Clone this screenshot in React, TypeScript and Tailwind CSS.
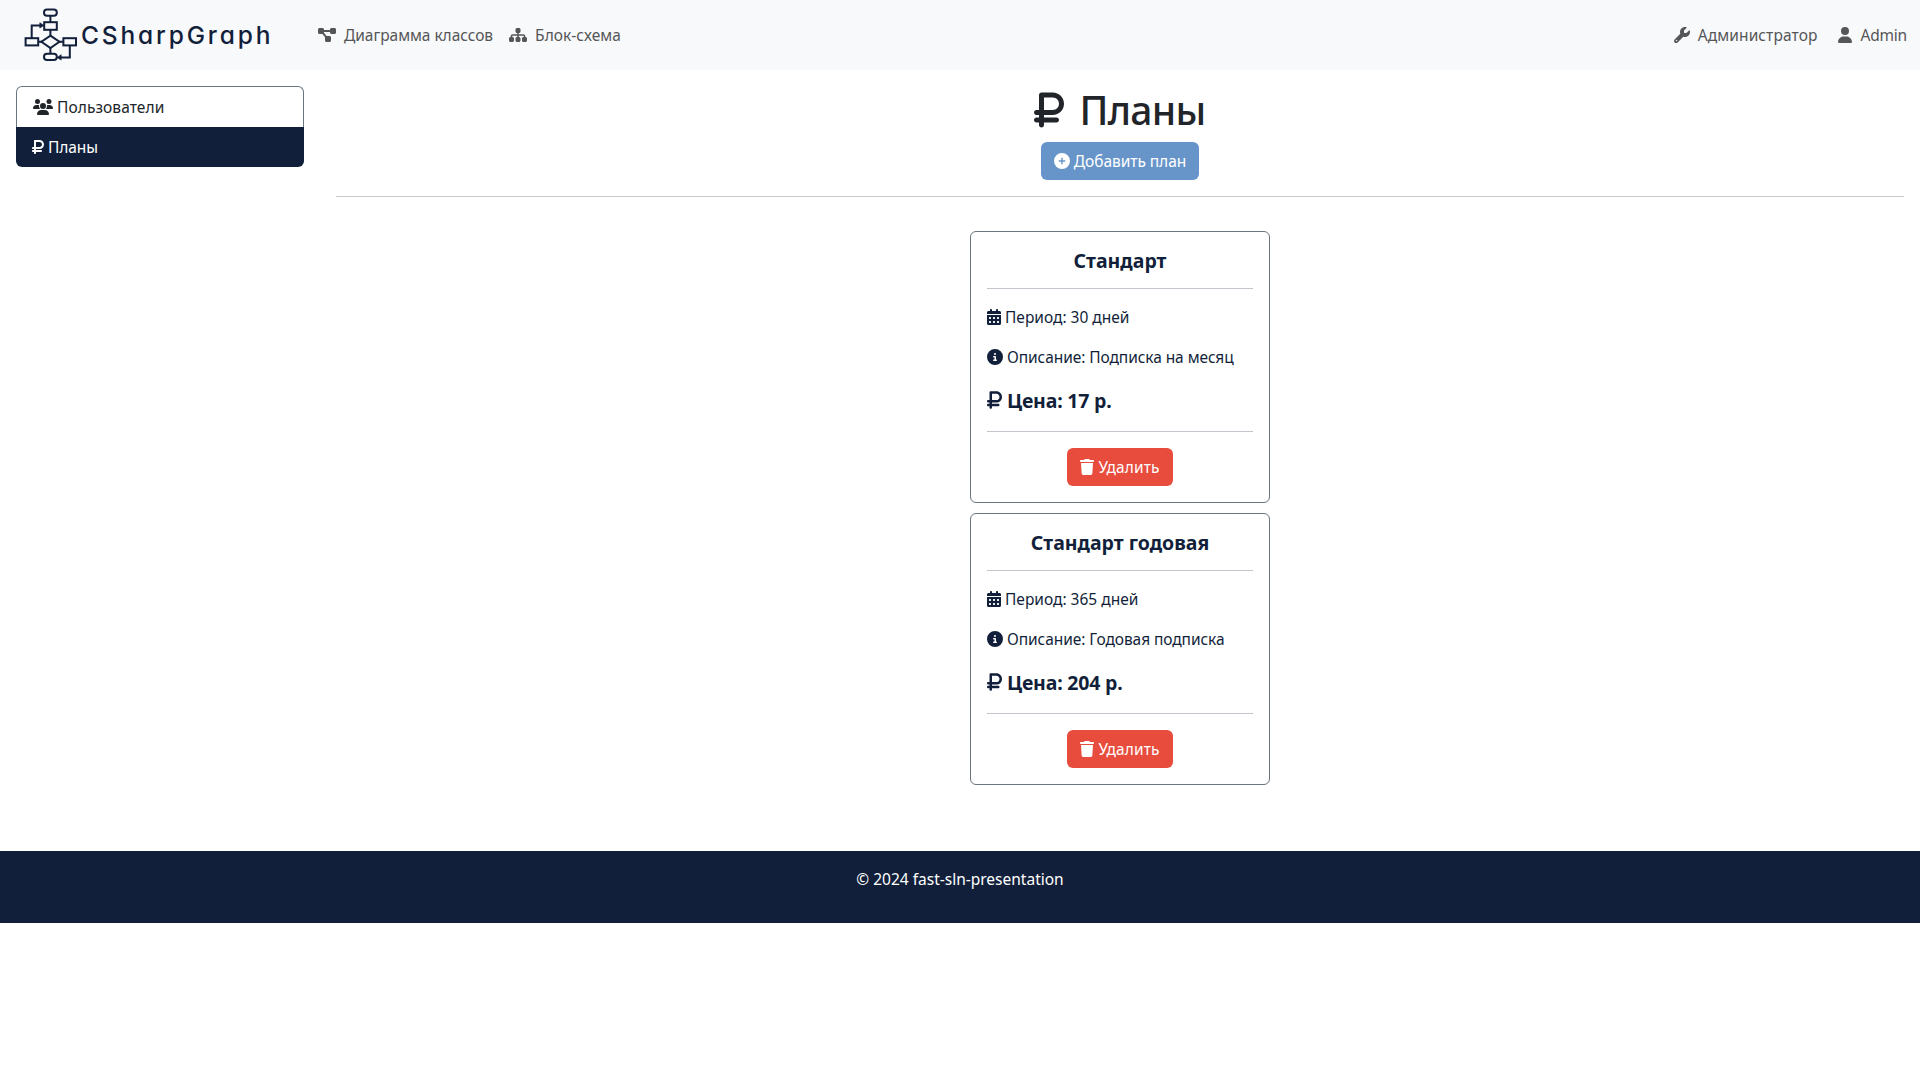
import type { ReactNode } from "react";
import {
  FaCalendarDays,
  FaCircleInfo,
  FaCirclePlus,
  FaDiagramProject,
  FaRubleSign,
  FaSitemap,
  FaTrash,
  FaUser,
  FaUsers,
  FaWrench,
} from "react-icons/fa6";

function Logo() {
  return (
    <div className="flex h-[54px] w-[248px] items-center text-[#121f3a]">
      <svg
        className="h-[54px] w-[54px] shrink-0"
        viewBox="0 0 54 54"
        fill="none"
        stroke="currentColor"
        strokeWidth="2"
      >
        <rect x="21" y="1.6" width="12.8" height="6.2" rx="3" />
        <rect x="21.2" y="14.2" width="12.6" height="7.6" />
        <rect x="2.6" y="30.2" width="12.6" height="7.2" />
        <rect x="40.4" y="30.2" width="12.6" height="7.2" />
        <rect x="21" y="45.8" width="12.8" height="6.2" rx="3" />
        <path d="M27.4 27.6 36.4 33.8l-9 6.2-9-6.2z" />
        <path d="M27.4 8v6M27.4 22v5.6M27.4 40v6M15 33.8h4M36 33.8h4.4M8.7 30.2V17.4h9M46.8 37.4v12h-9" />
        <path d="M16.8 14.7v5.4l4.2-2.7zM38.2 46.7v5.4l-4.2-2.7z" fill="currentColor" strokeWidth="0.6" />
      </svg>
      <span className="ml-1 whitespace-nowrap font-['Inter',sans-serif] text-[24.5px] leading-none font-[450] tracking-[2.85px] [font-feature-settings:'cv11']">
        CSharpGraph
      </span>
    </div>
  );
}

function NavLink({ children, className }: { children: ReactNode; className?: string }) {
  return (
    <a className={`flex items-center gap-2 whitespace-nowrap text-[#555657] ${className ?? ""}`}>{children}</a>
  );
}

type Plan = { name: string; period: string; description: string; price: string };

const plans: Plan[] = [
  { name: "Стандарт", period: "30 дней", description: "Подписка на месяц", price: "17 р." },
  { name: "Стандарт годовая", period: "365 дней", description: "Годовая подписка", price: "204 р." },
];

function PlanCard({ plan }: { plan: Plan }) {
  return (
    <article className="w-[300px] rounded-md border border-[#68767f] p-4 text-[#121f3a]">
      <h5 className="h-6 pt-px text-center text-[19.5px] leading-6 font-bold">{plan.name}</h5>
      <hr className="my-4 border-[#c2c5cc]" />
      <p className="mb-4 flex h-6 items-center gap-1 whitespace-nowrap">
        <FaCalendarDays className="h-4 w-[14px] shrink-0" />
        <span>Период: {plan.period}</span>
      </p>
      <p className="mb-4 flex h-6 items-center gap-1 tracking-[-0.07px] whitespace-nowrap">
        <FaCircleInfo className="size-4 shrink-0" />
        <span>Описание: {plan.description}</span>
      </p>
      <p className="flex h-[30px] items-center gap-[5px] text-[19.5px] font-bold tracking-[-0.2px] whitespace-nowrap">
        <FaRubleSign className="h-5 w-[15px] shrink-0" />
        <span className="pt-[2px]">Цена: {plan.price}</span>
      </p>
      <hr className="my-4 border-[#c2c5cc]" />
      <button className="mx-auto flex h-[38px] w-[106px] items-center justify-center gap-1 rounded-md bg-[#e84c3d] text-white">
        <FaTrash className="h-4 w-[14px] shrink-0" />
        <span className="tracking-[0.12px]">Удалить</span>
      </button>
    </article>
  );
}

export default function App() {
  return (
    <div className="min-h-screen bg-white font-['Noto_Sans',sans-serif] text-[15.5px] leading-6 text-[#212529]">
      <header className="flex h-[70px] items-center bg-[#f8f9fb] pr-[13px] pl-[23px]">
        <Logo />
        <NavLink className="ml-[47px]">
          <FaDiagramProject className="h-4 w-[18px] shrink-0" />
          <span className="tracking-[-0.04px]">Диаграмма классов</span>
        </NavLink>
        <NavLink className="ml-4">
          <FaSitemap className="h-4 w-[18px] shrink-0" />
          <span className="tracking-[0.08px]">Блок-схема</span>
        </NavLink>
        <NavLink className="ml-auto">
          <FaWrench className="size-4 shrink-0" />
          <span className="tracking-[0.1px]">Администратор</span>
        </NavLink>
        <NavLink className="ml-[21px]">
          <FaUser className="h-4 w-[14px] shrink-0" />
          <span className="tracking-[-0.2px]">Admin</span>
        </NavLink>
      </header>

      <div className="flex px-4 pt-4">
        <nav className="w-[288px] shrink-0">
          <a className="flex h-[41px] items-center gap-1 rounded-t-md border border-b-0 border-[#68767f] pl-4">
            <FaUsers className="h-4 w-5 shrink-0" />
            <span className="tracking-[0.08px]">Пользователи</span>
          </a>
          <a className="flex h-10 items-center gap-1 rounded-b-md bg-[#121f3a] pl-4 text-white">
            <FaRubleSign className="h-4 w-3 shrink-0" />
            <span className="tracking-[-0.1px]">Планы</span>
          </a>
        </nav>

        <main className="ml-8 flex flex-1 flex-col items-center">
          <h1 className="flex h-12 items-center gap-[15px] pb-px text-[39px] leading-[48px] font-[550] tracking-[-0.7px]">
            <FaRubleSign className="h-10 w-[30px]" />
            <span>Планы</span>
          </h1>
          <button className="mt-2 flex h-[38px] w-[158px] items-center justify-center gap-1 rounded-md bg-[#6795c9] text-white">
            <FaCirclePlus className="size-4 shrink-0" />
            <span className="tracking-[-0.05px]">Добавить план</span>
          </button>
          <hr className="mt-4 w-full border-[#c7c8ca]" />
          <section className="mt-[34px] flex flex-col gap-[10px]">
            {plans.map((plan) => (
              <PlanCard key={plan.name} plan={plan} />
            ))}
          </section>
        </main>
      </div>

      <footer className="mt-[66px] h-[72px] bg-[#121f3a] pt-4 text-center text-white">
        © 2024 fast-sln-presentation
      </footer>
    </div>
  );
}
